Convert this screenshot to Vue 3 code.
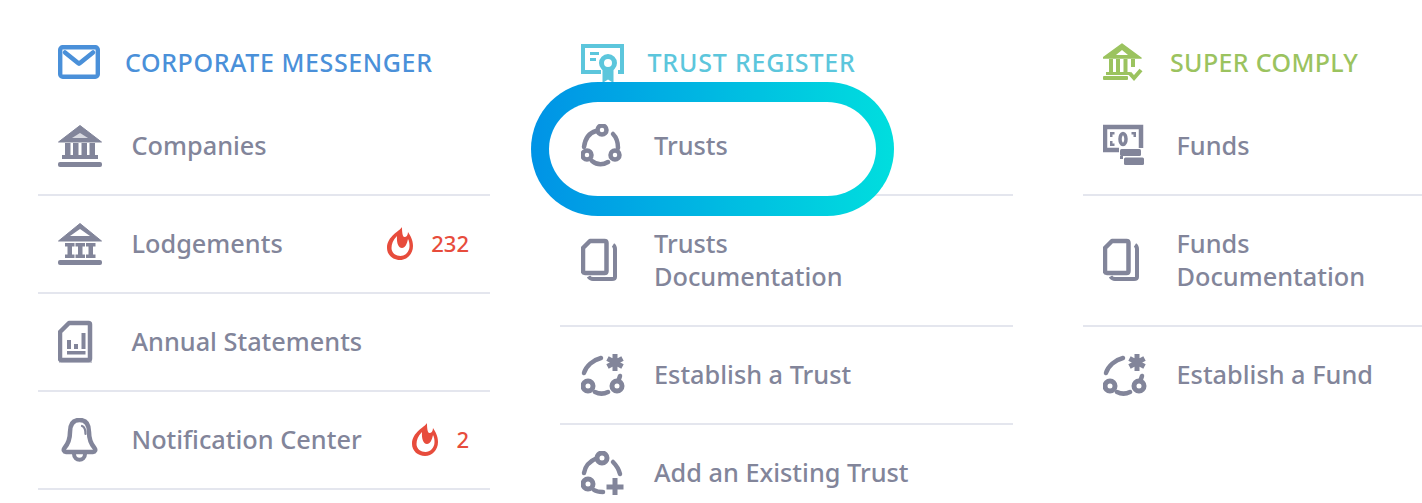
<template>
  <main class="board">
    <section class="col">
      <header class="head blue">
        <svg class="icon" viewBox="0 0 44 44"><rect x="2.200" y="6.200" width="37.600" height="29.600" rx="2.500" fill="none" stroke="currentColor" stroke-width="4.400"/><path d="M7 11.500 L20 22 Q21 23 22 22 L35 11.500" fill="none" stroke="currentColor" stroke-width="4.500" stroke-linecap="round"/></svg>
        <span>CORPORATE MESSENGER</span>
      </header>
      <div class="row">
        <svg class="icon" viewBox="0 0 44 44"><path d="M22 1.500 L43.500 18 L0.500 18Z" fill="currentColor" stroke="currentColor" stroke-linejoin="round"/><path d="M22 9 L14 14 H30Z" fill="#d8d9e0"/><path d="M7 19h5.500v12H7zM15 19h5.500v12H15zM23.500 19H29v12h-5.500zM31.500 19H37v12h-5.500zM4 31h36v4H4z" fill="currentColor"/><rect y="38" width="44" height="5" rx="2" fill="currentColor"/></svg>
        <span class="label">Companies</span>
      </div>
      <div class="row">
        <svg class="icon" viewBox="0 0 44 44"><path d="M22 1.500 L43.500 19 L0.500 19Z" fill="currentColor" stroke="currentColor" stroke-linejoin="round"/><path d="M22 7 L12 14 H32Z" fill="#fff"/><path d="M7 21h9.500v3.500H14v8h2.500V36H7v-3.500h2.500v-8H7zM17.500 21H27v3.500h-2.500v8H27V36h-9.500v-3.500H20v-8h-2.500zM28 21h9.500v3.500H35v8h2.500V36H28v-3.500h2.500v-8H28z" fill="currentColor"/><rect y="38" width="44" height="5" rx="2" fill="currentColor"/></svg>
        <span class="label">Lodgements</span>
        <span class="badge">
          <svg class="flame" viewBox="0 0 26 33"><path fill-rule="evenodd" d="M15 0C13 4 0 9 0 21C0 28 6 33 13 33C20 33 26 27 26 19C26 13 23.500 9 21 5C21 8 19.500 10 17.500 10C15.500 10 15 5 15 0ZM10 9C6 13 4.500 17 4.500 21C4.500 26 9 29 13.500 29C18 29 22.500 25 22.500 19C22.500 16 22 14 21 12C20 17 18 21 15 21C11 21 9.500 15 10 9Z" fill="currentColor"/></svg>
          <b class="count">232</b>
        </span>
      </div>
      <div class="row">
        <svg class="icon" viewBox="0 0 44 44"><path d="M1 42H34" stroke="#c9cad3" stroke-width="2"/><path d="M11 3H30.500Q32 3 32 4.500V38.500Q32 40 30.500 40H3.500Q2 40 2 38.500V12Z" fill="none" stroke="currentColor" stroke-width="4.500" stroke-linejoin="round"/><path d="M9 20h4v9H9zM16 24h4v5h-4zM23.500 13h4v16h-4zM9 31h18.500v3.500H9z" fill="currentColor"/></svg>
        <span class="label">Annual Statements</span>
      </div>
      <div class="row">
        <svg class="icon" viewBox="0 0 44 44"><path d="M21.500 2C13.500 2 12 8 12 14C12 22 10 26 6.500 30C5 32 6 34 8 34H35C37 34 38 32 36.500 30C33 26 31 22 31 14C31 8 29.500 2 21.500 2Z" fill="none" stroke="currentColor" stroke-width="4.500" stroke-linejoin="round"/><path d="M16 36C16 43.500 27 43.500 27 36" fill="none" stroke="currentColor" stroke-width="4"/><path d="M24 8C27 9 27.500 13 27.500 16" fill="none" stroke="currentColor" stroke-width="2.200" stroke-linecap="round"/></svg>
        <span class="label">Notification Center</span>
        <span class="badge">
          <svg class="flame" viewBox="0 0 26 33"><path fill-rule="evenodd" d="M15 0C13 4 0 9 0 21C0 28 6 33 13 33C20 33 26 27 26 19C26 13 23.500 9 21 5C21 8 19.500 10 17.500 10C15.500 10 15 5 15 0ZM10 9C6 13 4.500 17 4.500 21C4.500 26 9 29 13.500 29C18 29 22.500 25 22.500 19C22.500 16 22 14 21 12C20 17 18 21 15 21C11 21 9.500 15 10 9Z" fill="currentColor"/></svg>
          <b class="count">2</b>
        </span>
      </div>
    </section>

    <section class="col">
      <header class="head teal">
        <svg class="icon" viewBox="0 0 44 44"><path d="M20 31H2V5H41V31H37" fill="none" stroke="currentColor" stroke-width="4"/><path d="M9 11h9v3H9zM9 17h6v3H9z" fill="currentColor"/><path d="M21.500 27V42L27 38.500L32.500 42V27Z" fill="currentColor"/><circle cx="27" cy="22" r="6.500" fill="#fff" stroke="currentColor" stroke-width="5"/></svg>
        <span>TRUST REGISTER</span>
      </header>
      <div class="row active">
        <i class="pill"></i>
        <svg class="icon" viewBox="0 0 44 44"><g fill="none" stroke="currentColor" stroke-width="4.500" stroke-linecap="round"><path d="M15 7C8 9 4 15 3 23"/><path d="M32 10C35 13 37 18 37 24"/><path d="M11 37C16 41 22 41 27 38"/></g><g fill="#fff" stroke="currentColor" stroke-width="4.500"><circle cx="21" cy="6" r="4.500"/><circle cx="6" cy="31" r="4.500"/><circle cx="34" cy="31" r="4.500"/></g></svg>
        <span class="label">Trusts</span>
      </div>
      <div class="row">
        <svg class="icon" viewBox="0 0 44 44"><path d="M32 7C33.500 8 34 9 34 11V39Q34 41 31 41H12C10 41 8.500 40 7.500 38.500" fill="none" stroke="currentColor" stroke-width="4"/><path d="M9 3H23.500Q25.500 3 25.500 5V33Q25.500 35 23.500 35H4Q2 35 2 33V10Z" fill="#fff" stroke="currentColor" stroke-width="4.500" stroke-linejoin="round"/></svg>
        <span class="label">Trusts<br>Documentation</span>
      </div>
      <div class="row">
        <svg class="icon" viewBox="0 0 44 44"><g fill="none" stroke="currentColor" stroke-width="4.500" stroke-linecap="round"><path d="M3 20C5 13 12 7 20 5"/><path d="M14 39C18 41 23 41 27 39"/><path d="M37 29L39 23"/></g><path d="M34 1v17M26.500 5.500l15 8M41.500 5.500l-15 8" stroke="currentColor" stroke-width="5"/><g fill="#fff" stroke="currentColor" stroke-width="5"><circle cx="7" cy="33" r="5"/><circle cx="36" cy="33" r="5"/></g></svg>
        <span class="label">Establish a Trust</span>
      </div>
      <div class="row">
        <svg class="icon" viewBox="0 0 44 44"><g fill="none" stroke="currentColor" stroke-width="4.500" stroke-linecap="round"><path d="M3 22C4 15 9 10 16 7"/><path d="M32 11C35 14 38 19 39 23"/><path d="M13 39C16 41 19 41 22 41"/></g><path d="M34 27v17M25.500 36h17" stroke="currentColor" stroke-width="5"/><g fill="#fff" stroke="currentColor" stroke-width="5"><circle cx="21" cy="7" r="5"/><circle cx="7" cy="33" r="5"/></g></svg>
        <span class="label">Add an Existing Trust</span>
      </div>
    </section>

    <section class="col">
      <header class="head green">
        <svg class="icon" viewBox="0 0 44 44"><path d="M19 3 L38 17 L0 17Z" fill="currentColor" stroke="currentColor" stroke-width="1.500" stroke-linejoin="round"/><path d="M19 9 L13 14 H25Z" fill="#fff"/><path d="M6 18h4v13H6zM13 18h4v13h-4zM20.500 18h4v13h-4zM28 18h4v8h-4zM3 31h24v3H3z" fill="currentColor"/><rect y="35" width="25" height="4" rx="1" fill="currentColor"/><path d="M26.500 32L31 37L38 29" fill="none" stroke="currentColor" stroke-width="4"/></svg>
        <span>SUPER COMPLY</span>
      </header>
      <div class="row">
        <svg class="icon" viewBox="0 0 44 44"><path d="M16 26H2V3H38V24" fill="none" stroke="currentColor" stroke-width="4.500"/><ellipse cx="20" cy="15" rx="3" ry="5.500" fill="none" stroke="currentColor" stroke-width="3.500"/><path d="M7 8h4.500v2.500H9.500V13H7zM33 8h-4.500v2.500h2V13H33zM7 17h2.500v2.500h2V22H7z" fill="currentColor"/><rect x="17" y="25" width="21" height="7" rx="1.500" fill="currentColor"/><rect x="17" y="32" width="3" height="3" fill="currentColor"/><rect x="21" y="33.500" width="20" height="7.500" rx="1.500" fill="currentColor"/></svg>
        <span class="label">Funds</span>
      </div>
      <div class="row">
        <svg class="icon" viewBox="0 0 44 44"><path d="M32 7C33.500 8 34 9 34 11V39Q34 41 31 41H12C10 41 8.500 40 7.500 38.500" fill="none" stroke="currentColor" stroke-width="4"/><path d="M9 3H23.500Q25.500 3 25.500 5V33Q25.500 35 23.500 35H4Q2 35 2 33V10Z" fill="#fff" stroke="currentColor" stroke-width="4.500" stroke-linejoin="round"/></svg>
        <span class="label">Funds<br>Documentation</span>
      </div>
      <div class="row plain">
        <svg class="icon" viewBox="0 0 44 44"><g fill="none" stroke="currentColor" stroke-width="4.500" stroke-linecap="round"><path d="M3 20C5 13 12 7 20 5"/><path d="M14 39C18 41 23 41 27 39"/><path d="M37 29L39 23"/></g><path d="M34 1v17M26.500 5.500l15 8M41.500 5.500l-15 8" stroke="currentColor" stroke-width="5"/><g fill="#fff" stroke="currentColor" stroke-width="5"><circle cx="7" cy="33" r="5"/><circle cx="36" cy="33" r="5"/></g></svg>
        <span class="label">Establish a Fund</span>
      </div>
    </section>
  </main>
</template>

<script setup>
</script>

<style>
html, body { background: #fff; }
</style>

<style scoped>
.board {
  display: grid;
  grid-template-columns: 452.500px 452.500px 452.500px;
  column-gap: 70px;
  padding: 30px 0 0 37.500px;
  height: 473px;
  width: 1384.500px;
  overflow: hidden;
  font-family: "Noto Sans", "Open Sans", sans-serif;
}
.col { min-width: 0; }
.head {
  display: flex;
  align-items: center;
  height: 68px;
  padding: 0 0 2px 20.500px;
  box-sizing: border-box;
  font-size: 25px;
  font-weight: 500;
  letter-spacing: 0.600px;
}
.head span { margin: 0 0 2px 23px; }
.blue { color: #4a90d9; }
.teal { color: #5cc6dc; letter-spacing: 0.800px; }
.green { color: #9bc35f; letter-spacing: 0.350px; }
.icon { width: 44px; height: 44px; flex: none; }
.row {
  position: relative;
  display: flex;
  align-items: center;
  padding: 31px 21px 32px 20.500px;
  border-bottom: 2px solid #e4e6ee;
  color: #82859a;
  font-size: 25.300px;
  font-weight: 500;
  line-height: 33px;
}
.row.plain { border-bottom: none; }
.row > .icon { margin: -5.500px 0; }
.label { position: relative; margin-left: 29.500px; }
.active .icon { position: relative; }
.pill {
  position: absolute;
  left: -29px;
  top: -16px;
  width: 363px;
  height: 134px;
  box-sizing: border-box;
  border: solid transparent;
  border-width: 20px 18px;
  border-radius: 67px;
  background:
    linear-gradient(#fff, #fff) padding-box,
    linear-gradient(90deg, #0093e6, #00dede) border-box;
}
.badge {
  margin-left: auto;
  display: flex;
  align-items: center;
  height: 33px;
  color: #e74c3c;
}
.flame { width: 26px; height: 33px; }
.count {
  margin-left: 18px;
  font-weight: 500;
  font-size: 22px;
  line-height: 28px;
  padding-bottom: 2px;
}
</style>
